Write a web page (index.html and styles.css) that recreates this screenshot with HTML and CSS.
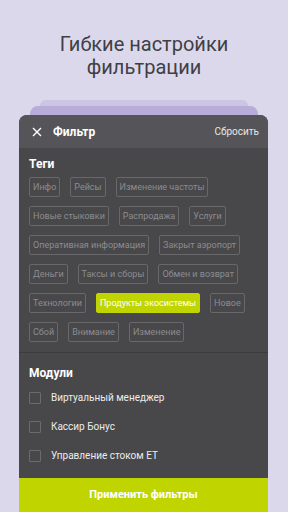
FILE: index.html
```html
<html>
	<head>
		<meta charset="utf-8">
		<meta name="viewport" content="width=device-width">
		<link rel="stylesheet" href="styles.css">
	</head>
	<body>
		<h1 class="titolo">Гибкие настройки<br>фильтрации</h1>
		<div class="strato strato-1"></div>
		<div class="strato strato-2"></div>
		<div class="scheda">
			<div class="testata">
				<svg class="chiudi" width="10" height="10" viewBox="0 0 10 10">
					<path d="M1 1 L9 9 M9 1 L1 9" stroke="#ffffff" stroke-width="1.4" fill="none"/>
				</svg>
				<span class="nome">Фильтр</span>
				<span class="reset">Сбросить</span>
			</div>
			<div class="sezione">
				<div class="etichetta">Теги</div>
				<div class="tag">
					<span>Инфо</span>
					<span>Рейсы</span>
					<span>Изменение частоты</span>
					<span>Новые стыковки</span>
					<span>Распродажа</span>
					<span>Услуги</span>
					<span>Оперативная информация</span>
					<span>Закрыт аэропорт</span>
					<span>Деньги</span>
					<span>Таксы и сборы</span>
					<span>Обмен и возврат</span>
					<span>Технологии</span>
					<span class="attivo">Продукты экосистемы</span>
					<span>Новое</span>
					<span>Сбой</span>
					<span>Внимание</span>
					<span>Изменение</span>
				</div>
			</div>
			<div class="sezione moduli">
				<div class="etichetta">Модули</div>
				<div class="voce"><span class="casella"></span>Виртуальный менеджер</div>
				<div class="voce"><span class="casella"></span>Кассир Бонус</div>
				<div class="voce"><span class="casella"></span>Управление стоком ЕТ</div>
			</div>
			<div class="applica">Применить фильтры</div>
		</div>
	</body>
</html>
```

FILE: styles.css
```css
body {
	margin: 0;
	height: 512px;
	overflow: hidden;
	background-color: #dcd8ec;
	font-family: Roboto, "Noto Sans", sans-serif;
}

.titolo {
	margin: 0;
	padding-top: 33px;
	height: 100px;
	box-sizing: border-box;
	text-align: center;
	font-size: 20px;
	font-weight: normal;
	line-height: 23px;
	color: #3f3f46;
}

.strato {
	border-radius: 8px 8px 0 0;
}

.strato-1 {
	height: 6px;
	margin: 0 40px;
	background-color: #cdc5e4;
}

.strato-2 {
	height: 9px;
	margin: 0 30px;
	background-color: #b8acd9;
}

.scheda {
	margin-left: 19px;
	width: 249px;
	background-color: #48484b;
	border-radius: 8px 8px 0 0;
	overflow: hidden;
}

.testata {
	display: flex;
	align-items: center;
	height: 33px;
	padding: 0 9px 0 13px;
	background-color: #555559;
	color: #ffffff;
}

.chiudi {
	margin-right: 11px;
}

.nome {
	font-size: 12px;
	font-weight: bold;
	flex: 1;
}

.reset {
	font-size: 10px;
	color: #e6e6e6;
}

.sezione {
	padding: 9px 10px 10px;
}

.etichetta {
	font-size: 12px;
	font-weight: bold;
	color: #ffffff;
	line-height: 14px;
	margin-bottom: 6px;
}

.tag {
	display: flex;
	flex-wrap: wrap;
	gap: 9px 10px;
}

.tag > span {
	height: 20px;
	line-height: 18px;
	box-sizing: border-box;
	padding: 0 3px;
	border: 1px solid #68686b;
	border-radius: 2px;
	font-size: 9px;
	color: #8c8c8f;
}

.tag > span.attivo {
	background-color: #c0d500;
	border-color: #c0d500;
	color: #ffffff;
}

.moduli {
	border-top: 1px solid #3c3c3e;
	padding-top: 13px;
	padding-bottom: 8px;
}

.moduli .etichetta {
	margin-bottom: 3px;
}

.voce {
	display: flex;
	align-items: center;
	height: 29px;
	font-size: 10px;
	color: #ececec;
}

.casella {
	width: 12px;
	height: 12px;
	box-sizing: border-box;
	border: 1px solid #6b6b6e;
	border-radius: 1px;
	margin-right: 10px;
}

.applica {
	height: 40px;
	line-height: 34px;
	text-align: center;
	background-color: #c0d500;
	color: #ffffff;
	font-size: 11px;
	font-weight: bold;
}
```
